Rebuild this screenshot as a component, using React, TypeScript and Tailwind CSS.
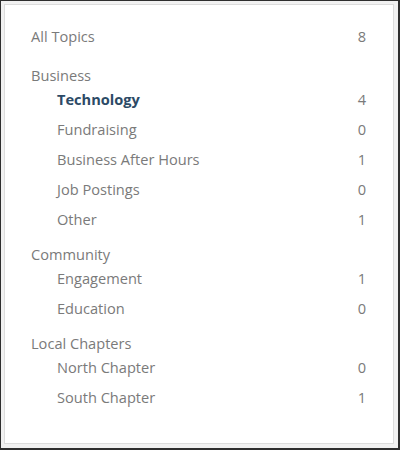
import React from 'react';

// ---------------------------------------------------------------------------
// Data
// ---------------------------------------------------------------------------

interface Topic {
  name: string;
  count: number;
  active?: boolean;
}

interface Group {
  name: string;
  topics: Topic[];
}

const groups: Group[] = [
  {
    name: 'Business',
    topics: [
      { name: 'Technology', count: 4, active: true },
      { name: 'Fundraising', count: 0 },
      { name: 'Business After Hours', count: 1 },
      { name: 'Job Postings', count: 0 },
      { name: 'Other', count: 1 },
    ],
  },
  {
    name: 'Community',
    topics: [
      { name: 'Engagement', count: 1 },
      { name: 'Education', count: 0 },
    ],
  },
  {
    name: 'Local Chapters',
    topics: [
      { name: 'North Chapter', count: 0 },
      { name: 'South Chapter', count: 1 },
    ],
  },
];

// ---------------------------------------------------------------------------
// Component — Topic list sidebar
// ---------------------------------------------------------------------------

function TopicRow({ topic }: { topic: Topic }) {
  return (
    <div className="flex h-[30px] items-center justify-between pl-[26px] leading-[30px]">
      <span
        className={
          topic.active ? 'font-bold text-[#2c4a66]' : 'text-[#7a7a7a]'
        }
      >
        {topic.name}
      </span>
      <span className="text-[#7a7a7a]">{topic.count}</span>
    </div>
  );
}

export default function App() {
  return (
    <div className="h-[450px] w-[400px] border-t border-l border-r-2 border-b-2 border-[#2e2e2e] bg-[#f1f1f1] pt-[3px] pl-[3px] pr-[4px] pb-[4px]">
      <div
        className="h-full border border-[#dcdcdc] bg-white pt-[16px] pl-[26px] pr-[27px] text-[14.6px] text-[#7a7a7a]"
        style={{ fontFamily: '"Open Sans", "Liberation Sans", sans-serif' }}
      >
        {/* All topics */}
        <div className="flex h-[30px] items-center justify-between leading-[30px]">
          <span>All Topics</span>
          <span>8</span>
        </div>

        {groups.map((group, i) => (
          <div key={group.name} className={i === 0 ? 'mt-[15px]' : 'mt-[11px]'}>
            <div className="h-[18px] leading-[18px]">{group.name}</div>
            {group.topics.map((topic) => (
              <TopicRow key={topic.name} topic={topic} />
            ))}
          </div>
        ))}
      </div>
    </div>
  );
}
